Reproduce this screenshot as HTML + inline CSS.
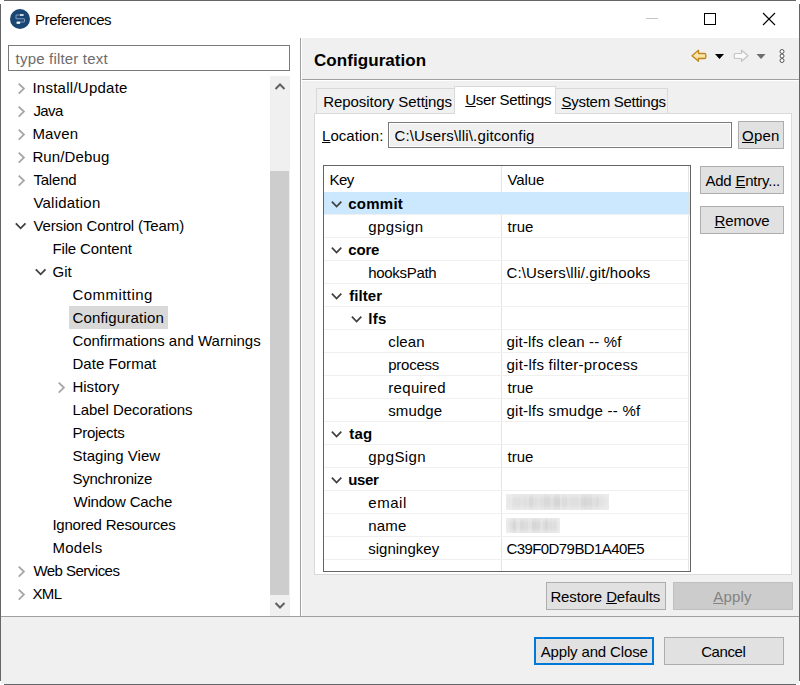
<!DOCTYPE html>
<html><head><meta charset="utf-8"><style>
html,body{margin:0;padding:0;width:800px;height:685px;overflow:hidden;background:#fff;}
body{position:relative;font-family:"Liberation Sans",sans-serif;color:#000;}
.b{position:absolute;box-sizing:border-box;}
.t{position:absolute;white-space:pre;font-family:"Liberation Sans",sans-serif;}
u{text-decoration:underline;text-underline-offset:1px;}
</style></head><body>
<div class="b" style="left:1px;top:1px;width:798px;height:37px;background:#ffffff;"></div>
<div class="b" style="left:1px;top:38px;width:299px;height:578px;background:#ffffff;"></div>
<div class="b" style="left:300px;top:38px;width:1px;height:578px;background:#a0a0a0;"></div>
<div class="b" style="left:301px;top:38px;width:1px;height:578px;background:#ffffff;"></div>
<div class="b" style="left:302px;top:38px;width:497px;height:578px;background:#f0f0f0;"></div>
<div class="b" style="left:302px;top:79px;width:497px;height:1px;background:#a0a0a0;"></div>
<div class="b" style="left:302px;top:80px;width:497px;height:1px;background:#ffffff;"></div>
<div class="b" style="left:1px;top:616px;width:798px;height:1px;background:#a0a0a0;"></div>
<div class="b" style="left:1px;top:617px;width:798px;height:67px;background:#f0f0f0;"></div>
<div class="b" style="left:4px;top:0px;width:792px;height:1px;background:#646669;"></div>
<div class="b" style="left:4px;top:684px;width:792px;height:1px;background:#646669;"></div>
<div class="b" style="left:0px;top:4px;width:1px;height:677px;background:#646669;"></div>
<div class="b" style="left:799px;top:4px;width:1px;height:677px;background:#646669;"></div>
<svg class="b" style="left:8px;top:7px" width="24" height="24" viewBox="0 0 24 24"><circle cx="12" cy="12" r="10" fill="#1a4674"/>
<path d="M12.2 8 H8.8 Q8 8 8 8.8 V10.9 Q8 11.7 8.8 11.7 H15.7 Q16.5 11.7 16.5 12.5 V14.2 Q16.5 15 15.7 15 H12" fill="none" stroke="#7f9aba" stroke-width="1.05"/>
<rect x="12" y="7.1" width="3.6" height="1.8" fill="#dfe7ef"/>
<rect x="8.6" y="14.6" width="3.5" height="2.2" fill="#ffffff"/></svg>
<div class="t" style="left:35.00px;top:9.80px;font-size:15px;line-height:20px;letter-spacing:-0.430px;">Preferences</div>
<div class="b" style="left:646px;top:18px;width:12px;height:1px;background:#c4c4c4;"></div>
<div class="b" style="left:704px;top:13px;width:12px;height:12px;box-shadow:inset 0 0 0 1px #000;"></div>
<svg class="b" style="left:762px;top:12px" width="14" height="14" viewBox="0 0 14 14"><path d="M1 1 L13 13 M13 1 L1 13" stroke="#000" stroke-width="1.1" fill="none"/></svg>
<div class="b" style="left:8px;top:45px;width:282px;height:26px;background:#fff;box-shadow:inset 0 0 0 1px #7a7a7a;"></div>
<div class="t" style="left:15.60px;top:48.80px;font-size:15px;line-height:20px;letter-spacing:0.187px;color:#6d6d6d;">type filter text</div>
<svg class="b" style="left:18px;top:82px" width="8" height="14" viewBox="0 0 8 14"><path d="M0.7 1.6 L5.9 6.6 L0.7 11.6" stroke="#a6a6a6" stroke-width="1.8" fill="none"/></svg>
<div class="t" style="left:32.40px;top:77.80px;font-size:15px;line-height:20px;letter-spacing:0.258px;">Install/Update</div>
<svg class="b" style="left:18px;top:105px" width="8" height="14" viewBox="0 0 8 14"><path d="M0.7 1.6 L5.9 6.6 L0.7 11.6" stroke="#a6a6a6" stroke-width="1.8" fill="none"/></svg>
<div class="t" style="left:33.40px;top:100.80px;font-size:15px;line-height:20px;letter-spacing:-0.600px;">Java</div>
<svg class="b" style="left:18px;top:128px" width="8" height="14" viewBox="0 0 8 14"><path d="M0.7 1.6 L5.9 6.6 L0.7 11.6" stroke="#a6a6a6" stroke-width="1.8" fill="none"/></svg>
<div class="t" style="left:32.40px;top:123.80px;font-size:15px;line-height:20px;letter-spacing:0.150px;">Maven</div>
<svg class="b" style="left:18px;top:151px" width="8" height="14" viewBox="0 0 8 14"><path d="M0.7 1.6 L5.9 6.6 L0.7 11.6" stroke="#a6a6a6" stroke-width="1.8" fill="none"/></svg>
<div class="t" style="left:32.40px;top:146.80px;font-size:15px;line-height:20px;letter-spacing:0.137px;">Run/Debug</div>
<svg class="b" style="left:18px;top:174px" width="8" height="14" viewBox="0 0 8 14"><path d="M0.7 1.6 L5.9 6.6 L0.7 11.6" stroke="#a6a6a6" stroke-width="1.8" fill="none"/></svg>
<div class="t" style="left:33.40px;top:169.80px;font-size:15px;line-height:20px;letter-spacing:-0.180px;">Talend</div>
<div class="t" style="left:33.40px;top:192.80px;font-size:15px;line-height:20px;letter-spacing:0.233px;">Validation</div>
<svg class="b" style="left:15px;top:221px" width="12" height="10" viewBox="0 0 12 10"><path d="M0.8 2.4 L5.65 7.3 L10.5 2.4" stroke="#404040" stroke-width="1.8" fill="none"/></svg>
<div class="t" style="left:33.40px;top:215.80px;font-size:15px;line-height:20px;letter-spacing:-0.126px;">Version Control (Team)</div>
<div class="t" style="left:52.40px;top:238.80px;font-size:15px;line-height:20px;letter-spacing:-0.127px;">File Content</div>
<svg class="b" style="left:35px;top:267px" width="12" height="10" viewBox="0 0 12 10"><path d="M0.8 2.4 L5.65 7.3 L10.5 2.4" stroke="#404040" stroke-width="1.8" fill="none"/></svg>
<div class="t" style="left:52.40px;top:261.80px;font-size:15px;line-height:20px;letter-spacing:0.100px;">Git</div>
<div class="t" style="left:72.40px;top:284.80px;font-size:15px;line-height:20px;letter-spacing:0.467px;">Committing</div>
<div class="b" style="left:69px;top:306px;width:99px;height:23px;background:#d9d9d9;"></div>
<div class="t" style="left:72.40px;top:307.80px;font-size:15px;line-height:20px;letter-spacing:0.183px;">Configuration</div>
<div class="t" style="left:72.40px;top:330.80px;font-size:15px;line-height:20px;letter-spacing:-0.016px;">Confirmations and Warnings</div>
<div class="t" style="left:72.40px;top:353.80px;font-size:15px;line-height:20px;letter-spacing:0.050px;">Date Format</div>
<svg class="b" style="left:58px;top:381px" width="8" height="14" viewBox="0 0 8 14"><path d="M0.7 1.6 L5.9 6.6 L0.7 11.6" stroke="#a6a6a6" stroke-width="1.8" fill="none"/></svg>
<div class="t" style="left:72.40px;top:376.80px;font-size:15px;line-height:20px;letter-spacing:0.033px;">History</div>
<div class="t" style="left:72.40px;top:399.80px;font-size:15px;line-height:20px;letter-spacing:-0.044px;">Label Decorations</div>
<div class="t" style="left:72.40px;top:422.80px;font-size:15px;line-height:20px;letter-spacing:-0.257px;">Projects</div>
<div class="t" style="left:72.40px;top:445.80px;font-size:15px;line-height:20px;letter-spacing:0.045px;">Staging View</div>
<div class="t" style="left:72.40px;top:468.80px;font-size:15px;line-height:20px;letter-spacing:-0.250px;">Synchronize</div>
<div class="t" style="left:73.40px;top:491.80px;font-size:15px;line-height:20px;letter-spacing:-0.173px;">Window Cache</div>
<div class="t" style="left:52.40px;top:514.80px;font-size:15px;line-height:20px;letter-spacing:-0.219px;">Ignored Resources</div>
<div class="t" style="left:52.40px;top:537.80px;font-size:15px;line-height:20px;letter-spacing:0.300px;">Models</div>
<svg class="b" style="left:18px;top:565px" width="8" height="14" viewBox="0 0 8 14"><path d="M0.7 1.6 L5.9 6.6 L0.7 11.6" stroke="#a6a6a6" stroke-width="1.8" fill="none"/></svg>
<div class="t" style="left:33.40px;top:560.80px;font-size:15px;line-height:20px;letter-spacing:-0.518px;">Web Services</div>
<svg class="b" style="left:18px;top:588px" width="8" height="14" viewBox="0 0 8 14"><path d="M0.7 1.6 L5.9 6.6 L0.7 11.6" stroke="#a6a6a6" stroke-width="1.8" fill="none"/></svg>
<div class="t" style="left:32.40px;top:583.80px;font-size:15px;line-height:20px;letter-spacing:-0.600px;">XML</div>
<div class="b" style="left:270px;top:76px;width:20px;height:540px;background:#f0f0f0;"></div>
<div class="b" style="left:270px;top:171px;width:19px;height:424px;background:#cdcdcd;"></div>
<svg class="b" style="left:274px;top:82px" width="12" height="9" viewBox="0 0 12 9"><path d="M1.5 7 L6 2.5 L10.5 7" stroke="#606060" stroke-width="2" fill="none"/></svg>
<svg class="b" style="left:274px;top:601px" width="12" height="9" viewBox="0 0 12 9"><path d="M1.5 2 L6 6.5 L10.5 2" stroke="#606060" stroke-width="2" fill="none"/></svg>
<div class="t" style="left:314.00px;top:50.61px;font-size:17px;line-height:20px;letter-spacing:0.062px;font-weight:bold;">Configuration</div>
<svg class="b" style="left:690px;top:48px" width="100" height="16" viewBox="0 0 100 16"><defs><linearGradient id="ag" x1="0" y1="0" x2="0" y2="1"><stop offset="0" stop-color="#fff6d2"/><stop offset="1" stop-color="#f5d27a"/></linearGradient></defs>
<path d="M2 7.75 L8.5 2.2 V5.5 H14.5 Q15.8 5.5 15.8 6.8 V9.2 Q15.8 10.5 14.5 10.5 H8.5 V13.3 Z" fill="url(#ag)" stroke="#c0871e" stroke-width="1.3" stroke-linejoin="round"/>
<path d="M25 6 H34 L29.5 11 Z" fill="#000"/>
<path d="M58 7.75 L51.5 2.2 V5.5 H45.5 Q44.2 5.5 44.2 6.8 V9.2 Q44.2 10.5 45.5 10.5 H51.5 V13.3 Z" fill="#f9f9f9" stroke="#c4c4c4" stroke-width="1.2" stroke-linejoin="round"/>
<path d="M66.5 6 H75.5 L71 11 Z" fill="#6d6d6d"/>
<circle cx="92" cy="3.5" r="2" fill="#fff" stroke="#555" stroke-width="1"/>
<circle cx="92" cy="8" r="2" fill="#fff" stroke="#555" stroke-width="1"/>
<circle cx="92" cy="12.5" r="2" fill="#fff" stroke="#555" stroke-width="1"/></svg>
<div class="b" style="left:314px;top:113px;width:478px;height:462px;background:#ffffff;box-shadow:inset 0 0 0 1px #d9d9d9;"></div>
<div class="b" style="left:316px;top:88px;width:139px;height:26px;background:#f0f0f0;box-shadow:inset 0 0 0 1px #d9d9d9;"></div>
<div class="b" style="left:555px;top:88px;width:113px;height:26px;background:#f0f0f0;box-shadow:inset 0 0 0 1px #d9d9d9;"></div>
<div class="b" style="left:454px;top:86px;width:102px;height:28px;background:#ffffff;box-shadow:inset 0 0 0 1px #d9d9d9;"></div>
<div class="b" style="left:455px;top:112px;width:100px;height:3px;background:#ffffff;"></div>
<div class="t" style="left:323.25px;top:92.00px;font-size:15px;line-height:20px;letter-spacing:-0.069px;">Repository Sett<u>i</u>ngs</div>
<div class="t" style="left:465.25px;top:89.80px;font-size:15px;line-height:20px;letter-spacing:-0.312px;"><u>U</u>ser Settings</div>
<div class="t" style="left:561.50px;top:92.30px;font-size:15px;line-height:20px;letter-spacing:-0.279px;"><u>S</u>ystem Settings</div>
<div class="t" style="left:322.00px;top:125.80px;font-size:15px;line-height:20px;letter-spacing:0.050px;"><u>L</u>ocation:</div>
<div class="b" style="left:388px;top:122px;width:344px;height:26px;background:#f0f0f0;box-shadow:inset 0 0 0 1px #7a7a7a,inset 0 0 0 2px #ffffff;"></div>
<div class="t" style="left:394.50px;top:125.80px;font-size:15px;line-height:20px;letter-spacing:0.148px;">C:\Users\lli\.gitconfig</div>
<div class="b" style="left:738px;top:121px;width:46px;height:28px;background:#e1e1e1;box-shadow:inset 0 0 0 1px #adadad;"></div>
<div class="t" style="left:742.10px;top:125.80px;font-size:15px;line-height:20px;letter-spacing:0.217px;"><u>O</u>pen</div>
<div class="b" style="left:323px;top:165px;width:368px;height:407px;background:#ffffff;box-shadow:inset 0 0 0 1px #646464;"></div>
<div class="b" style="left:501px;top:166px;width:1px;height:405px;background:#e5e5e5;"></div>
<div class="b" style="left:688px;top:166px;width:1px;height:405px;background:#e5e5e5;"></div>
<div class="t" style="left:329.50px;top:169.80px;font-size:15px;line-height:20px;letter-spacing:-0.600px;">Key</div>
<div class="t" style="left:507.50px;top:169.80px;font-size:15px;line-height:20px;letter-spacing:-0.100px;">Value</div>
<div class="b" style="left:324px;top:192px;width:366px;height:22px;background:#cce8ff;"></div>
<div class="b" style="left:688px;top:192px;width:1px;height:22px;background:#d6e4ee;"></div>
<div class="b" style="left:501px;top:192px;width:1px;height:22px;background:#d6e4ee;"></div>
<div class="b" style="left:324px;top:214px;width:366px;height:1px;background:#f0f0f0;"></div>
<svg class="b" style="left:331px;top:200px" width="12" height="10" viewBox="0 0 12 10"><path d="M0.9 1.7 L5.6 6.5 L10.3 1.7" stroke="#404040" stroke-width="1.75" fill="none"/></svg>
<div class="t" style="left:348.25px;top:193.80px;font-size:15px;line-height:20px;letter-spacing:0.250px;font-weight:bold;">commit</div>
<div class="b" style="left:324px;top:237px;width:366px;height:1px;background:#f0f0f0;"></div>
<div class="t" style="left:368.25px;top:216.80px;font-size:15px;line-height:20px;letter-spacing:0.375px;">gpgsign</div>
<div class="t" style="left:507.50px;top:216.80px;font-size:15px;line-height:20px;letter-spacing:0.000px;">true</div>
<div class="b" style="left:324px;top:260px;width:366px;height:1px;background:#f0f0f0;"></div>
<svg class="b" style="left:331px;top:246px" width="12" height="10" viewBox="0 0 12 10"><path d="M0.9 1.7 L5.6 6.5 L10.3 1.7" stroke="#404040" stroke-width="1.75" fill="none"/></svg>
<div class="t" style="left:348.25px;top:239.80px;font-size:15px;line-height:20px;letter-spacing:-0.167px;font-weight:bold;">core</div>
<div class="b" style="left:324px;top:283px;width:366px;height:1px;background:#f0f0f0;"></div>
<div class="t" style="left:368.25px;top:262.80px;font-size:15px;line-height:20px;letter-spacing:-0.312px;">hooksPath</div>
<div class="t" style="left:506.50px;top:262.80px;font-size:15px;line-height:20px;letter-spacing:0.136px;">C:\Users\lli/.git/hooks</div>
<div class="b" style="left:324px;top:306px;width:366px;height:1px;background:#f0f0f0;"></div>
<svg class="b" style="left:331px;top:292px" width="12" height="10" viewBox="0 0 12 10"><path d="M0.9 1.7 L5.6 6.5 L10.3 1.7" stroke="#404040" stroke-width="1.75" fill="none"/></svg>
<div class="t" style="left:349.25px;top:285.80px;font-size:15px;line-height:20px;letter-spacing:0.050px;font-weight:bold;">filter</div>
<div class="b" style="left:324px;top:329px;width:366px;height:1px;background:#f0f0f0;"></div>
<svg class="b" style="left:351px;top:315px" width="12" height="10" viewBox="0 0 12 10"><path d="M0.9 1.7 L5.6 6.5 L10.3 1.7" stroke="#404040" stroke-width="1.75" fill="none"/></svg>
<div class="t" style="left:368.25px;top:308.80px;font-size:15px;line-height:20px;letter-spacing:0.250px;font-weight:bold;">lfs</div>
<div class="b" style="left:324px;top:352px;width:366px;height:1px;background:#f0f0f0;"></div>
<div class="t" style="left:388.25px;top:331.80px;font-size:15px;line-height:20px;letter-spacing:0.125px;">clean</div>
<div class="t" style="left:506.50px;top:331.80px;font-size:15px;line-height:20px;letter-spacing:0.181px;">git-lfs clean -- %f</div>
<div class="b" style="left:324px;top:375px;width:366px;height:1px;background:#f0f0f0;"></div>
<div class="t" style="left:388.25px;top:354.80px;font-size:15px;line-height:20px;letter-spacing:-0.250px;">process</div>
<div class="t" style="left:506.50px;top:354.80px;font-size:15px;line-height:20px;letter-spacing:0.262px;">git-lfs filter-process</div>
<div class="b" style="left:324px;top:398px;width:366px;height:1px;background:#f0f0f0;"></div>
<div class="t" style="left:388.25px;top:377.80px;font-size:15px;line-height:20px;letter-spacing:0.321px;">required</div>
<div class="t" style="left:507.50px;top:377.80px;font-size:15px;line-height:20px;letter-spacing:0.000px;">true</div>
<div class="b" style="left:324px;top:421px;width:366px;height:1px;background:#f0f0f0;"></div>
<div class="t" style="left:388.25px;top:400.80px;font-size:15px;line-height:20px;letter-spacing:0.100px;">smudge</div>
<div class="t" style="left:506.50px;top:400.80px;font-size:15px;line-height:20px;letter-spacing:0.237px;">git-lfs smudge -- %f</div>
<div class="b" style="left:324px;top:444px;width:366px;height:1px;background:#f0f0f0;"></div>
<svg class="b" style="left:331px;top:430px" width="12" height="10" viewBox="0 0 12 10"><path d="M0.9 1.7 L5.6 6.5 L10.3 1.7" stroke="#404040" stroke-width="1.75" fill="none"/></svg>
<div class="t" style="left:349.25px;top:423.80px;font-size:15px;line-height:20px;letter-spacing:0.250px;font-weight:bold;">tag</div>
<div class="b" style="left:324px;top:467px;width:366px;height:1px;background:#f0f0f0;"></div>
<div class="t" style="left:368.25px;top:446.80px;font-size:15px;line-height:20px;letter-spacing:0.375px;">gpgSign</div>
<div class="t" style="left:507.50px;top:446.80px;font-size:15px;line-height:20px;letter-spacing:0.000px;">true</div>
<div class="b" style="left:324px;top:490px;width:366px;height:1px;background:#f0f0f0;"></div>
<svg class="b" style="left:331px;top:476px" width="12" height="10" viewBox="0 0 12 10"><path d="M0.9 1.7 L5.6 6.5 L10.3 1.7" stroke="#404040" stroke-width="1.75" fill="none"/></svg>
<div class="t" style="left:348.25px;top:469.80px;font-size:15px;line-height:20px;letter-spacing:-0.333px;font-weight:bold;">user</div>
<div class="b" style="left:324px;top:513px;width:366px;height:1px;background:#f0f0f0;"></div>
<div class="t" style="left:368.25px;top:492.80px;font-size:15px;line-height:20px;letter-spacing:0.562px;">email</div>
<div class="b" style="left:506px;top:494px;width:103px;height:16px;background:linear-gradient(to bottom,rgba(240,240,240,.6),rgba(240,240,240,0) 35%,rgba(240,240,240,0) 65%,rgba(240,240,240,.6)),linear-gradient(90deg,rgba(240,240,240,.8),rgba(240,240,240,0) 12%,rgba(240,240,240,0) 92%,rgba(240,240,240,.6)),linear-gradient(90deg,#d9d9d9 0px 4px,#e2e2e2 4px 6px,#dcdcdc 6px 10px,#dfdfdf 10px 14px,#e2e2e2 14px 16px,#e2e2e2 16px 18px,#dfdfdf 18px 21px,#e2e2e2 21px 23px,#d9d9d9 23px 27px,#dfdfdf 27px 31px,#e2e2e2 31px 34px,#dfdfdf 34px 38px,#d9d9d9 38px 40px,#d9d9d9 40px 44px,#dfdfdf 44px 48px,#d6d6d6 48px 52px,#d6d6d6 52px 54px,#e2e2e2 54px 56px,#dcdcdc 56px 58px,#dcdcdc 58px 61px,#e2e2e2 61px 65px,#dfdfdf 65px 69px,#dfdfdf 69px 72px,#e2e2e2 72px 75px,#d9d9d9 75px 78px,#d6d6d6 78px 80px,#d9d9d9 80px 83px,#d9d9d9 83px 86px,#dfdfdf 86px 90px,#dcdcdc 90px 93px,#e2e2e2 93px 96px,#e2e2e2 96px 99px,#e2e2e2 99px 103px);"></div>
<div class="b" style="left:324px;top:536px;width:366px;height:1px;background:#f0f0f0;"></div>
<div class="t" style="left:368.25px;top:515.80px;font-size:15px;line-height:20px;letter-spacing:0.167px;">name</div>
<div class="b" style="left:506px;top:518px;width:54px;height:15px;background:linear-gradient(to bottom,rgba(240,240,240,.6),rgba(240,240,240,0) 35%,rgba(240,240,240,0) 65%,rgba(240,240,240,.6)),linear-gradient(90deg,rgba(240,240,240,.8),rgba(240,240,240,0) 15%,rgba(240,240,240,0) 85%,rgba(240,240,240,.7)),linear-gradient(90deg,#dfdfdf 0px 4px,#d9d9d9 4px 7px,#d6d6d6 7px 10px,#e2e2e2 10px 14px,#d9d9d9 14px 18px,#dcdcdc 18px 22px,#e2e2e2 22px 26px,#d6d6d6 26px 30px,#d9d9d9 30px 34px,#e2e2e2 34px 37px,#dcdcdc 37px 39px,#d6d6d6 39px 42px,#dfdfdf 42px 44px,#dcdcdc 44px 46px,#dfdfdf 46px 48px,#d6d6d6 48px 51px,#dfdfdf 51px 54px);"></div>
<div class="b" style="left:324px;top:559px;width:366px;height:1px;background:#f0f0f0;"></div>
<div class="t" style="left:368.25px;top:538.80px;font-size:15px;line-height:20px;letter-spacing:0.000px;">signingkey</div>
<div class="t" style="left:506.50px;top:538.80px;font-size:15px;line-height:20px;letter-spacing:-0.583px;">C39F0D79BD1A40E5</div>
<div class="b" style="left:324px;top:582px;width:366px;height:1px;background:#f0f0f0;"></div>
<div class="b" style="left:700px;top:166px;width:84px;height:28px;background:#e1e1e1;box-shadow:inset 0 0 0 1px #adadad;"></div>
<div class="t" style="left:705.40px;top:170.80px;font-size:15px;line-height:20px;letter-spacing:-0.218px;">Add <u>E</u>ntry...</div>
<div class="b" style="left:700px;top:206px;width:84px;height:28px;background:#e1e1e1;box-shadow:inset 0 0 0 1px #adadad;"></div>
<div class="t" style="left:714.60px;top:210.80px;font-size:15px;line-height:20px;letter-spacing:-0.180px;"><u>R</u>emove</div>
<div class="b" style="left:546px;top:582px;width:120px;height:28px;background:#e1e1e1;box-shadow:inset 0 0 0 1px #adadad;"></div>
<div class="t" style="left:550.40px;top:587.30px;font-size:15px;line-height:20px;letter-spacing:-0.120px;">Restore <u>D</u>efaults</div>
<div class="b" style="left:673px;top:582px;width:120px;height:28px;background:#cccccc;box-shadow:inset 0 0 0 1px #bfbfbf;"></div>
<div class="t" style="left:713.20px;top:587.30px;font-size:15px;line-height:20px;letter-spacing:0.175px;color:#838383;"><u>A</u>pply</div>
<div class="b" style="left:534px;top:637px;width:120px;height:28px;background:#e1e1e1;box-shadow:inset 0 0 0 2px #0078d7;"></div>
<div class="t" style="left:540.70px;top:641.80px;font-size:15px;line-height:20px;letter-spacing:-0.150px;">Apply and Close</div>
<div class="b" style="left:664px;top:637px;width:120px;height:28px;background:#e1e1e1;box-shadow:inset 0 0 0 1px #adadad;"></div>
<div class="t" style="left:701.20px;top:641.80px;font-size:15px;line-height:20px;letter-spacing:-0.420px;">Cancel</div>
</body></html>
